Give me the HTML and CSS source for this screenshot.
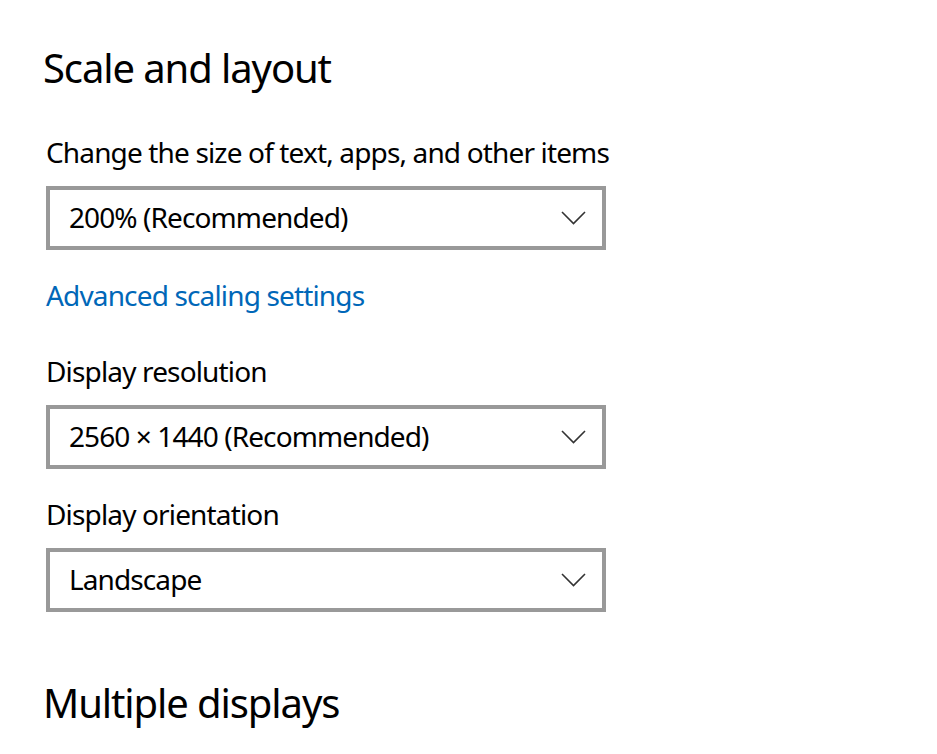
FILE: index.html
```html
<!DOCTYPE html>
<html lang="en">
<head>
<meta charset="utf-8">
<title>Scale and layout</title>
<link rel="stylesheet" href="styles.css">
</head>
<body>
<main class="page">
  <h2 class="section-title first">Scale and layout</h2>

  <div class="field field-first">
    <div class="label">Change the size of text, apps, and other items</div>
    <div class="combo">
      <span class="combo-text">200% (Recommended)</span>
      <svg class="chevron" width="25" height="14" viewBox="0 0 25 14" aria-hidden="true"><polyline points="1,1 12.5,12.5 24,1" fill="none" stroke="#333" stroke-width="1.6"/></svg>
    </div>
  </div>

  <a class="link" href="#">Advanced scaling settings</a>

  <div class="field field-res">
    <div class="label">Display resolution</div>
    <div class="combo">
      <span class="combo-text">2560 × 1440 (Recommended)</span>
      <svg class="chevron" width="25" height="14" viewBox="0 0 25 14" aria-hidden="true"><polyline points="1,1 12.5,12.5 24,1" fill="none" stroke="#333" stroke-width="1.6"/></svg>
    </div>
  </div>

  <div class="field field-orient">
    <div class="label">Display orientation</div>
    <div class="combo">
      <span class="combo-text">Landscape</span>
      <svg class="chevron" width="25" height="14" viewBox="0 0 25 14" aria-hidden="true"><polyline points="1,1 12.5,12.5 24,1" fill="none" stroke="#333" stroke-width="1.6"/></svg>
    </div>
  </div>

  <h2 class="section-title second">Multiple displays</h2>
</main>
</body>
</html>
```

FILE: styles.css
```css
html, body {
  margin: 0;
  padding: 0;
  background: #ffffff;
}

body {
  font-family: "Noto Sans", "Open Sans", sans-serif;
  color: #000000;
  overflow: hidden;
}

.page {
  display: flex;
  flex-direction: column;
  align-items: flex-start;
  padding-left: 44px;
}

.section-title {
  margin: 0;
  margin-left: -1px;
  font-size: 40px;
  line-height: 56px;
  font-weight: 400;
  letter-spacing: -1.1px;
  color: #000;
}

.section-title.first {
  margin-top: 40px;
}

.section-title.second {
  margin-top: 63px;
}

.field {
  display: flex;
  flex-direction: column;
  gap: 14px;
  margin-left: 2px;
}

.field-first {
  margin-top: 36px;
}

.field-res {
  margin-top: 36px;
}

.field-orient {
  margin-top: 25px;
}

.label {
  font-size: 28px;
  line-height: 40px;
  letter-spacing: -0.85px;
}

.combo {
  box-sizing: border-box;
  width: 560px;
  height: 64px;
  border: 4px solid #999999;
  background: #fff;
  display: flex;
  align-items: center;
  justify-content: space-between;
  padding: 0 16px 0 19px;
}

.combo-text {
  font-size: 28px;
  line-height: 40px;
  letter-spacing: -0.9px;
  margin-top: -2px;
}

.chevron {
  display: block;
}

.link {
  margin-top: 25px;
  margin-left: 2px;
  font-size: 28px;
  line-height: 40px;
  letter-spacing: -0.85px;
  color: #0067b8;
  text-decoration: none;
}
```
